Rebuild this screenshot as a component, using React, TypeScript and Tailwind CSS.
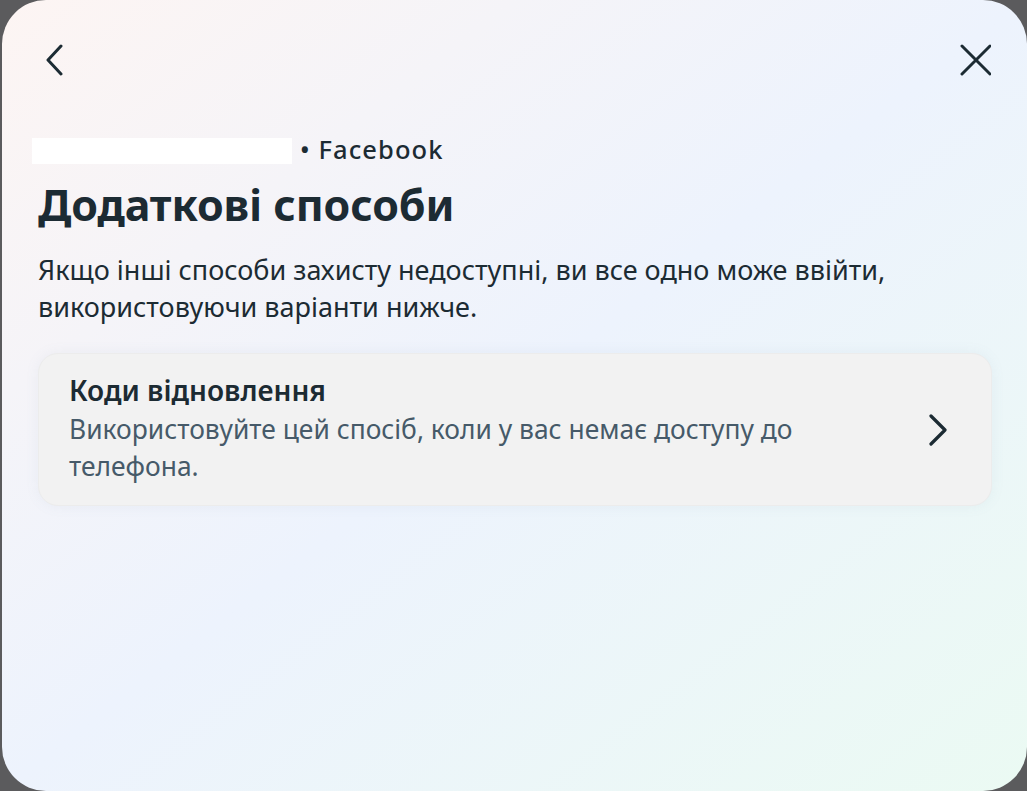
import React from 'react'

const ChevronLeft = () => (
    <svg width="32" height="32" viewBox="0 0 32 32" fill="none" stroke="#1c2b33" strokeWidth="3" strokeLinecap="round" strokeLinejoin="round">
        <path d="M22 2L9 16l13 14" />
    </svg>
)

const CloseIcon = () => (
    <svg width="32" height="32" viewBox="0 0 32 32" fill="none" stroke="#1c2b33" strokeWidth="3" strokeLinecap="round">
        <path d="M3 2l28 28M31 2L3 30" />
    </svg>
)

const ChevronRight = () => (
    <svg width="22" height="32" viewBox="0 0 22 32" fill="none" stroke="#1c2b33" strokeWidth="3.2" strokeLinecap="round" strokeLinejoin="round">
        <path d="M4 2l14 14L4 30" />
    </svg>
)

const App = () => {
    return (
        <div className="w-[1027px] h-[791px] bg-[#5b5b5d] overflow-hidden" style={{ fontFamily: '"Noto Sans", "Open Sans", sans-serif' }}>
            <div className="ml-[2px] h-full rounded-[44px] bg-gradient-to-br from-[#fdf5f3] via-[#edf3fd] to-[#ebfaf3] px-[36px] pt-[43px] text-[#1c2b33]">
                <div className="flex items-center justify-between h-[34px]">
                    <button className="ml-[1px] flex items-center justify-center">
                        <ChevronLeft />
                    </button>
                    <button className="flex items-center justify-center">
                        <CloseIcon />
                    </button>
                </div>

                <div className="mt-[61px] flex items-center h-[26px]">
                    <div className="-ml-[6px] w-[260px] h-[26px] bg-white" />
                    <span className="ml-[8px] -mt-[3px] text-[25.5px] font-medium leading-none tracking-[1.1px]">• Facebook</span>
                </div>

                <h1 className="mt-[14px] text-[43px] font-bold leading-[54px] tracking-[-0.1px]">Додаткові способи</h1>

                <p className="mt-[19px] text-[27px] leading-[37px] text-[#1c2b33]">
                    Якщо інші способи захисту недоступні, ви все одно може ввійти,
                    <br />
                    використовуючи варіанти нижче.
                </p>

                <button className="mt-[28px] w-[954px] h-[153px] rounded-[20px] bg-[#f2f2f2] border border-[#ececec] shadow-[0_0_14px_rgba(120,140,170,0.08)] flex items-center justify-between pl-[30px] pr-[42px] text-left">
                    <div className="-mt-[2px]">
                        <div className="text-[28px] font-semibold leading-[34px] text-[#1c2b33]">Коди відновлення</div>
                        <div className="mt-[4px] text-[26.4px] leading-[37px] text-[#465a69]">
                            Використовуйте цей спосіб, коли у вас немає доступу до
                            <br />
                            телефона.
                        </div>
                    </div>
                    <ChevronRight />
                </button>
            </div>
        </div>
    )
}

export default App
